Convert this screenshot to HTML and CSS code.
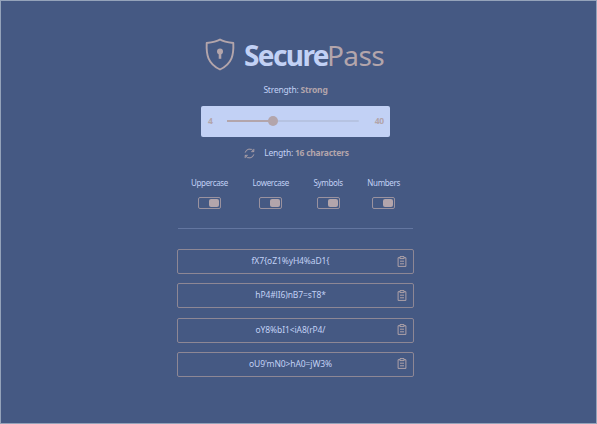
FILE: index.html
```html
<!DOCTYPE html>
<html lang="en">
<head>
<meta charset="utf-8">
<title>SecurePass</title>
<link rel="stylesheet" href="styles.css">
</head>
<body>
<svg width="0" height="0" class="defs"><defs>
<symbol id="clip" viewBox="0 0 10 11"><path d="M3 1.7H1.1v8.7h7.8V1.7H7M3 .6h4v2H3zM3 5.2h4M3 7.8h4" fill="none" stroke="currentColor" stroke-width=".95"/></symbol>
</defs></svg>
<main class="app">
<header class="brand">
<svg class="shield" viewBox="0 0 30 33"><path d="M15 1.5C11.500 3.700 6.500 4.500 1.700 5C1.200 16.500 2.600 25.500 15 31.500C27.400 25.500 28.800 16.500 28.300 5C23.500 4.500 18.500 3.700 15 1.500Z" fill="none" stroke="currentColor" stroke-width="1.9" stroke-linejoin="round"/><circle cx="15" cy="13.600" r="3" fill="currentColor"/><path d="M15 14v6.800" stroke="currentColor" stroke-width="2.600"/></svg>
<h1><b>Secure</b><span>Pass</span></h1>
</header>
<p class="strength">Strength: <b>Strong</b></p>
<section class="slider"><span>4</span><div class="track"><i class="fill"></i><i class="thumb"></i></div><span>40</span></section>
<div class="length"><svg viewBox="0 0 12 12"><path d="M1.300 5A5 5 0 0 1 10.400 3.500M10.700 1v3H7.900M10.700 7A5 5 0 0 1 1.600 8.500M1.300 11V8h2.800" fill="none" stroke="currentColor" stroke-width="1"/></svg><p>Length: <b>16 characters</b></p></div>
<section class="options">
<label>Uppercase<i class="toggle"></i></label>
<label>Lowercase<i class="toggle"></i></label>
<label>Symbols<i class="toggle"></i></label>
<label>Numbers<i class="toggle"></i></label>
</section>
<ul class="passwords">
<li><span>fX7{oZ1%yH4%aD1{</span><svg><use href="#clip"/></svg></li>
<li><span>hP4#lI6)nB7=sT8*</span><svg><use href="#clip"/></svg></li>
<li><span>oY8%bI1&lt;iA8(rP4/</span><svg><use href="#clip"/></svg></li>
<li><span>oU9'mN0&gt;hA0=jW3%</span><svg><use href="#clip"/></svg></li>
</ul>
</main>
</body>
</html>
```
FILE: styles.css
```css
* { box-sizing: border-box; margin: 0; padding: 0; }
body { width: 597px; height: 424px; overflow: hidden; background: #455983; border: 1px solid #94a3ba; color: #c2d1f5; font: 8.5px/12px "Noto Sans", sans-serif; }
.defs { display: block; height: 0; }
.app { width: 237px; margin-left: 176px; padding-top: 37px; display: flex; flex-direction: column; align-items: center; }
.brand { display: flex; align-items: center; height: 33px; width: 181px; color: #b3a5ab; }
.shield { width: 30px; height: 33px; flex: none; margin-right: 9px; }
h1 { display: flex; font-size: 28px; line-height: 33px; padding-top: 1px; white-space: nowrap; font-weight: 400; }
h1 b { width: 83px; font-weight: 700; letter-spacing: -1.6px; color: #c2d1f5; }
h1 span { letter-spacing: -.6px; }
p b, .slider { color: #b3a5ab; font-weight: 700; }
.strength { margin-top: 13px; letter-spacing: -.2px; }
.slider { width: 189px; height: 31px; margin-top: 9.500px; padding: 0 6px 0 7px; display: flex; align-items: center; justify-content: space-between; background: #c2d1f5; border-radius: 2px; }
.track { position: relative; width: 132px; height: 2px; margin-right: 2px; background: #b6c3e2; border-radius: 1px; }
.fill { display: block; width: 46px; height: 2px; background: #b3a5ab; }
.thumb { position: absolute; left: 41px; top: -4px; width: 10px; height: 10px; border-radius: 50%; background: #b3a5ab; }
.slider span { margin-top: -1px; letter-spacing: -.2px; }
.length { display: flex; align-items: center; gap: 9px; margin: 10.500px 0 0 2px; height: 12px; letter-spacing: -.24px; }
.length svg { width: 11px; height: 11px; color: #b3a5ab; }
.options { width: 235px; height: 52px; margin-top: 18px; padding: 0 13px; display: flex; justify-content: space-between; border-bottom: 1px solid #6376a0; font-size: 8px; letter-spacing: -.34px; }
.options label { display: flex; flex-direction: column; align-items: center; }
.toggle { width: 23px; height: 12px; margin-top: 8px; padding: 1px; border: 1px solid #9a929f; border-radius: 2px; display: flex; justify-content: flex-end; }
.toggle::after { content: ""; width: 10px; height: 8px; border-radius: 2px; background: #b3a5ab; }
.passwords { width: 237px; margin-top: 20px; display: grid; gap: 9.300px; list-style: none; }
li { height: 25px; display: grid; grid-template-columns: 16px 1fr 16px; align-items: center; border: 1px solid #8d8795; border-radius: 2px; }
li span { grid-column: 2; text-align: center; margin-left: -10px; margin-top: -1px; letter-spacing: -.1px; }
li svg { width: 10px; height: 11px; margin-top: -1px; color: #b3a5ab; }
```
